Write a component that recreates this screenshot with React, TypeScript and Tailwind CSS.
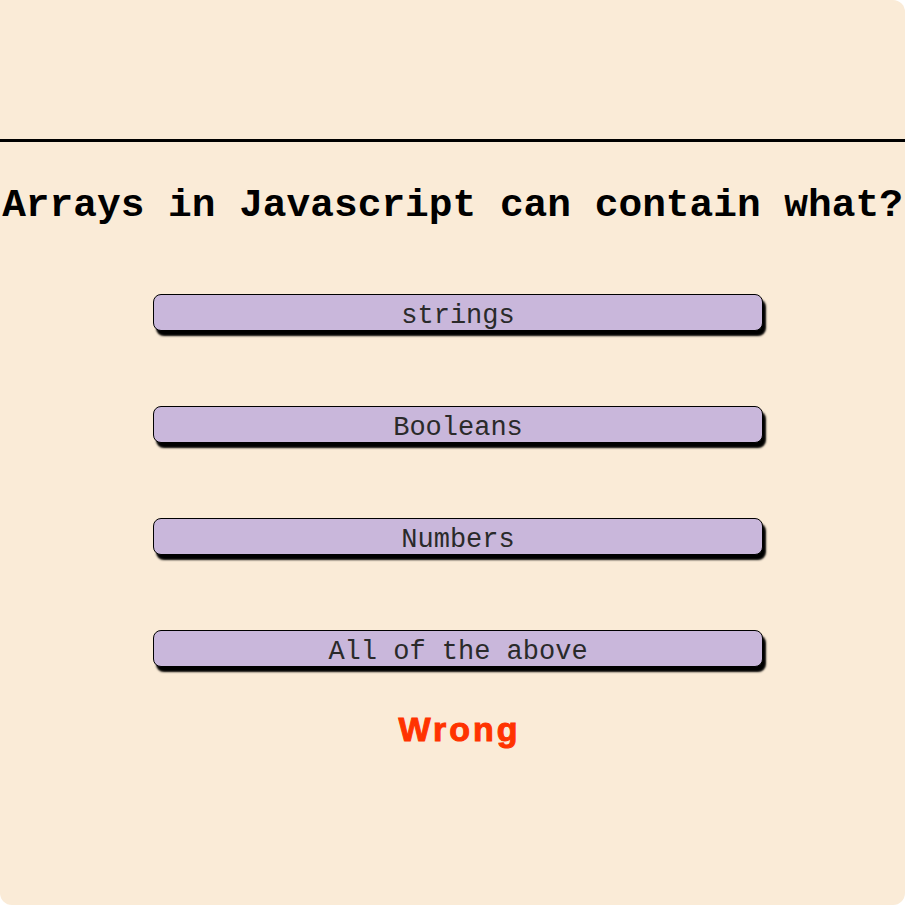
import React from 'react';

const answers = ['strings', 'Booleans', 'Numbers', 'All of the above'];

const App: React.FC = () => {
  return (
    <div className="w-[905px] h-[905px] bg-white">
      <div className="w-full h-full bg-[#faebd7] rounded-tr-[12px] rounded-b-[12px] overflow-hidden flex flex-col">
        <div className="h-[139px] shrink-0" />
        <div className="h-[3px] bg-black shrink-0" />

        <div className="mt-[44px] flex justify-center whitespace-nowrap">
          <h1 className="font-['Liberation_Mono',monospace] font-bold text-[39.5px] leading-[40px] text-black">
            Arrays in Javascript can contain what?
          </h1>
        </div>

        <div className="mt-[68px] ml-[153px] w-[610px] flex flex-col gap-[75px]">
          {answers.map((a) => (
            <button
              key={a}
              className="h-[37px] w-full flex items-center justify-center pt-[8px] rounded-[8px] border border-black bg-[#c9b7db] shadow-[3px_5px_2px_#000] font-['Liberation_Mono',monospace] text-[27px] leading-none text-[#2a2a2a]"
            >
              {a}
            </button>
          ))}
        </div>

        <div className="mt-[45px] ml-[153px] w-[610px] flex justify-center pl-[3px]">
          <p className="font-['Liberation_Sans',sans-serif] font-bold text-[34px] leading-none tracking-[3px] text-[#ff3300] [-webkit-text-stroke:1px_#ff3300]">
            Wrong
          </p>
        </div>
      </div>
    </div>
  );
};

export default App;
